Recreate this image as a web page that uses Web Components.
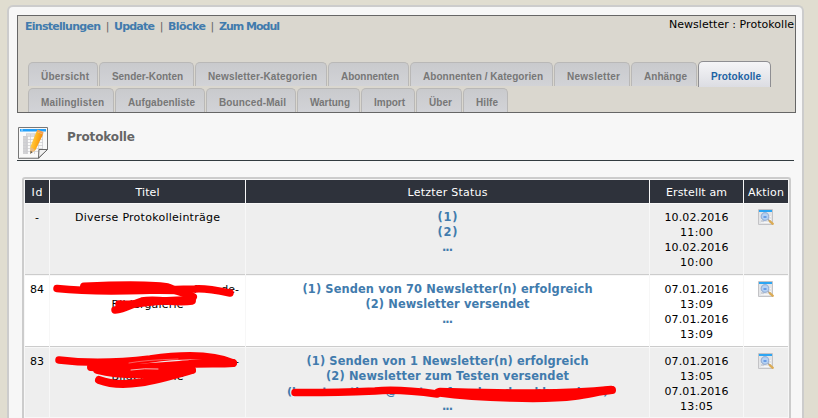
<!DOCTYPE html>
<html lang="de"><head><meta charset="utf-8"><title>Protokolle</title>
<style>html,body{margin:0;height:418px;overflow:hidden;background:#e0ddd0}body{font:11px/15px "DejaVu Sans",Verdana,sans-serif;color:#000}</style></head>
<body><admin-page></admin-page>
<script>
function define(name, html, ready) {
  const t = document.createElement('template');
  t.innerHTML = html;
  customElements.define(name, class extends HTMLElement {
    constructor() { super(); this.attachShadow({mode:'open'}).append(t.content.cloneNode(true)); }
    connectedCallback() { if (ready) ready.call(this); }
  });
}
// One line of text, tracked to the width given in "w".
define('text-line', `<style>:host{display:block;height:15px;line-height:15px;white-space:nowrap}span{display:inline-block;height:15px}</style><span><slot></slot></span>`, function () {
  const w = +this.getAttribute('w'), s = this.shadowRoot.querySelector('span'), n = this.textContent.length;
  if (w && n > 1) {
    const d = (w - s.getBoundingClientRect().width) / (n - 1);
    s.style.letterSpacing = d + 'px';
    s.style.marginRight = -d + 'px';
  }
});
define('nav-tab', `<style>:host{display:block;box-sizing:border-box;height:24px;margin-right:1px;border:1px solid #b9b8b7;border-bottom:0;border-radius:5px 5px 0 0;background:linear-gradient(#c9cacd,#d2d3d7);color:#777;font:bold 10px/15px "Liberation Sans",Arial,sans-serif;padding:6px 0 0 12px}
:host([active]){height:26px;margin-top:-1px;padding-top:7px;border-color:#8e8e92;background:linear-gradient(#f5f5f7,#dcdde3);color:#1c62a3}</style><text-line></text-line>`, function () {
  this.style.width = this.getAttribute('width') + 'px';
  const l = document.createElement('text-line');
  l.setAttribute('w', this.getAttribute('w')); l.textContent = this.getAttribute('label');
  this.shadowRoot.querySelector('text-line').replaceWith(l);
});
define('nav-panel', `<style>:host{display:block;box-sizing:border-box;width:779px;height:98px;border:1px solid #666;background:#dad7cf}
.top{display:flex;justify-content:space-between;height:46px;padding:3px 1px 0 7px;box-sizing:border-box}.links{display:flex;color:#666}b{color:#417bad}
.links i{font-style:normal;width:13px;text-align:center}.crumb{margin-top:-2px}
.row{display:flex;height:26px;padding-left:10px}.row+.row{height:24px}</style>
<div class="top"><div class="links"><b><text-line w="76">Einstellungen</text-line></b><i>|</i><b><text-line w="41">Update</text-line></b><i>|</i><b><text-line w="38">Blöcke</text-line></b><i>|</i><b><text-line w="61">Zum Modul</text-line></b></div><text-line class="crumb" w="125">Newsletter : Protokolle</text-line></div>
<div class="row"><nav-tab width="70" w="48" label="Übersicht"></nav-tab><nav-tab width="95" w="71" label="Sender-Konten"></nav-tab><nav-tab width="132" w="109" label="Newsletter-Kategorien"></nav-tab><nav-tab width="81" w="58" label="Abonnenten"></nav-tab><nav-tab width="143" w="120" label="Abonnenten / Kategorien"></nav-tab><nav-tab width="76" w="53" label="Newsletter"></nav-tab><nav-tab width="66" w="43" label="Anhänge"></nav-tab><nav-tab active width="73" w="50" label="Protokolle"></nav-tab></div>
<div class="row"><nav-tab width="86" w="63" label="Mailinglisten"></nav-tab><nav-tab width="90" w="67" label="Aufgabenliste"></nav-tab><nav-tab width="90" w="67" label="Bounced-Mail"></nav-tab><nav-tab width="63" w="40" label="Wartung"></nav-tab><nav-tab width="54" w="31" label="Import"></nav-tab><nav-tab width="46" w="23" label="Über"></nav-tab><nav-tab width="45" w="22" label="Hilfe"></nav-tab></div>`);
define('page-heading', `<style>:host{display:flex;box-sizing:border-box;width:777px;height:48px;padding:14px 0 0 1px;border-bottom:1px solid #333c40}svg{display:block;width:31px;height:33px}b{margin:3px 0 0 18px;font-size:12px;color:#666}</style>
<svg viewBox="0 0 31 33"><defs><linearGradient id="p" x1="0" y1="0" x2="1" y2=".4"><stop stop-color="#ffe070"/><stop offset=".55" stop-color="#ffb21c"/><stop offset="1" stop-color="#ee8210"/></linearGradient></defs>
<path d="M.5.5h29v22l-9 9H.5z" fill="#f9f9f9" stroke="#777"/><path d="M1.500 31h20" stroke="#aaa"/><path d="M2 2h26v2.500H2z" fill="#22a0fa"/><path d="M3 3h2" stroke="#b9e4ff"/>
<path d="M5 9h5v18H5z" fill="#d2d2d4"/><path d="M8 6h15v3H8z" fill="#dcdde0"/><path d="M5 9.500h20M5 12.500h20M5 15.500h20M5 18.500h20M5 21.500h20M5 24.500h16M8.500 7v20M12.500 7v20M16.500 7v20M20.500 7v20M24.500 7v15" stroke="#ccccd0" stroke-width=".7" fill="none"/>
<path d="M20.500 31l.5-8.500h8.500z" fill="#f2f2f2" stroke="#666"/><path d="M18.500 4.500l6.500 3L17.500 23 12.300 26.500l.2-7z" fill="url(#p)"/><path d="M18.500 4.500l1-2 6 2.500-.5 2.500z" fill="#f3a052"/><path d="M12.700 20l4.300 3-4.500 3.500z" fill="#e9b983"/><path d="M12.400 26.700l.2-3 2 1.500z" fill="#555"/></svg>
<b><text-line w="68">Protokolle</text-line></b>`);
define('view-icon', `<style>:host{display:block;width:17px;height:17px;margin:0 auto}svg{display:block}</style>
<svg width="17" height="17" viewBox="0 0 17 17"><path d="M.5.5h14v15H.5z" fill="#e4e5e7" stroke="#c3c3c6"/><path d="M1 1h13v2H1z" fill="#2ca5f3"/><path d="M3 5h3v9H3z" fill="#ccd0d8"/><path d="M3 7.500h10M3 10.500h10M3 13.500h8" stroke="#fff" stroke-width=".7"/><circle cx="7" cy="7.500" r="3.800" fill="#b4d2f5" stroke="#9bb1d4" stroke-width="1.200"/><path d="M5.500 8h3" stroke="#6a9ce4" stroke-width="2"/><path d="M10 10.500l2 1.500" stroke="#999" stroke-width="1.500"/><path d="M11.800 12.200l3 2.600" stroke="#dbab55" stroke-width="2.300" stroke-linecap="round"/></svg>`);
define('log-row', `<style>:host{display:grid;grid-template-columns:24px 195px 403px 93px 44px;column-gap:1px;height:71px;margin-top:1px;text-align:center;--bg:#fff}
:host([odd]){--bg:#eee}:host([head]){height:23px;margin:0;color:#fff;--bg:#2e323b}:host([last]){height:69px}
::slotted(*){box-sizing:border-box;display:block;background:var(--bg);border-bottom:1px solid #ccc;padding-top:6px}
:host([head]) ::slotted(*){border:0;padding-top:5px}::slotted(b){color:#417bad;font-size:11.4px}:host([last]) ::slotted(*){border:0}</style><slot></slot>`);
define('log-table', `<style>:host{display:block;box-sizing:border-box;width:769px;height:241px;margin:16px 0 0 5px;border:2px solid #ccc;border-bottom:0;border-radius:3px 3px 0 0;padding:1px 1px 0}view-icon{margin-top:-1px}.split{display:flex;height:15px;justify-content:flex-end;padding-right:6px}.split i{font-style:normal}.g{width:24px}.m{display:flex;height:15px;width:321px;margin:0 auto;justify-content:space-between;font-size:11px}</style>
<log-row head><div><text-line w="11">Id</text-line></div><div><text-line w="24">Titel</text-line></div><div><text-line w="80">Letzter Status</text-line></div><div><text-line w="61">Erstellt am</text-line></div><div><text-line w="36">Aktion</text-line></div></log-row>
<log-row odd><div>-</div><div><text-line w="145">Diverse Protokolleinträge</text-line></div><b><text-line w="20">(1)</text-line><text-line w="20">(2)</text-line><text-line w="11">...</text-line></b><div><text-line w="64">10.02.2016</text-line><text-line w="33">11:00</text-line><text-line w="64">10.02.2016</text-line><text-line w="33">10:00</text-line></div><div><view-icon></view-icon></div></log-row>
<log-row><div>84</div><div><div class="split"><i>f</i><i class="g"></i><i>de-</i></div><text-line w="72">Bildergalerie</text-line></div><b><text-line w="290">(1) Senden von 70 Newsletter(n) erfolgreich</text-line><text-line w="164">(2) Newsletter versendet</text-line><text-line w="11">...</text-line></b><div><text-line w="64">07.01.2016</text-line><text-line w="33">13:09</text-line><text-line w="64">07.01.2016</text-line><text-line w="33">13:09</text-line></div><div><view-icon></view-icon></div></log-row>
<log-row odd last><div>83</div><div><div class="split"><i>de-</i></div><text-line w="72">Bildergalerie</text-line></div><b><text-line w="282">(1) Senden von 1 Newsletter(n) erfolgreich</text-line><text-line w="243">(2) Newsletter zum Testen versendet</text-line><span class="m"><span>(b</span><span>t</span><span>th</span><span>@</span><span>t</span><span>f</span><span>d</span><span>d</span><span>bb</span><span>d</span><span>)</span></span><text-line w="11">...</text-line></b><div><text-line w="64">07.01.2016</text-line><text-line w="33">13:05</text-line><text-line w="64">07.01.2016</text-line><text-line w="33">13:05</text-line></div><div><view-icon></view-icon></div></log-row>`);
define('marker-strokes', `<style>:host{position:absolute;left:0;top:0;width:818px;height:418px}svg{display:block}</style>
<svg width="818" height="418" fill="none" stroke="#f00" stroke-width="7.500" stroke-linecap="round" stroke-linejoin="round">
<path d="M57 288.500C100 293 150 290 195 289C205 288 220 291 230 293"/><path d="M84 286.500C120 285 155 284 170 288C178 292 186 293 193 297" stroke-width="8"/><path d="M84 290C120 290 160 290 185 291" stroke-width="7"/>
<path d="M115 310C125 309 132 304 142 301C158 298 175 304 192 301"/><path d="M119 304C135 306 155 299 192 300"/>
<path d="M59 360C90 364 125 362 150 359C185 354 215 355 233 363"/><path d="M91 367C130 370 165 366 190 364C205 363 220 364 233 363" stroke-width="8"/><path d="M97 370C120 376 150 376 192 370"/><path d="M99 380C125 390 160 379 192 370" stroke-width="8"/>
<path d="M295 392.500C325 393 350 392 375 391C395 389 415 391 437 394"/><path d="M438 392.500C480 398 545 400 575 396C590 394 600 391 612 390" stroke-width="8"/><path d="M440 391.500C500 393 560 395 611 389.500"/>
<path d="M131 370Q145 368 158 369" stroke="#eee" stroke-width=".8"/><path d="M129 363Q145 360 178 359" stroke="#f3a5a5" stroke-width=".6"/></svg>`);
define('admin-page', `<style>:host{display:block;box-sizing:border-box;width:797px;height:413px;margin:5px 0 0 7px;border:2px solid #ccc;border-bottom:0;border-radius:6px 6px 0 0;background:#f7f7f7;padding:8px 0 0 8px;overflow:hidden}</style>
<nav-panel></nav-panel><page-heading></page-heading><log-table></log-table><marker-strokes></marker-strokes>`);
</script></body></html>
